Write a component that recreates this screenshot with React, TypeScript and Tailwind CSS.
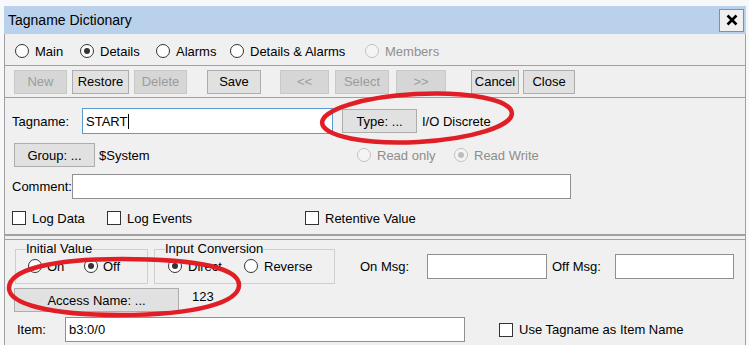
import React from "react";

function Radio({ checked = false, disabled = false }: { checked?: boolean; disabled?: boolean }) {
  return (
    <span
      className={
        "flex h-[14px] w-[14px] shrink-0 items-center justify-center rounded-full border " +
        (disabled ? "border-[#c2c2c2] bg-[#f4f4f4]" : "border-[#333333] bg-white")
      }
    >
      {checked && (
        <span className={"h-[6px] w-[6px] rounded-full " + (disabled ? "bg-[#bdbdbd]" : "bg-[#333333]")} />
      )}
    </span>
  );
}

function Check() {
  return <span className="h-[14px] w-[14px] shrink-0 border border-[#333333] bg-white" />;
}

const btn = "flex h-[24px] shrink-0 items-center justify-center border border-[#adadad] bg-[#e1e1e1] text-black";
const btnOff = "flex h-[24px] shrink-0 items-center justify-center border border-[#c8c8c8] bg-[#d6d6d6] text-[#9c9c9c]";

export default function App() {
  return (
    <div className="relative h-[345px] w-[749px] overflow-hidden bg-[#f7f8fa] pl-[4px] pt-[6px] font-['Liberation_Sans',Arial,sans-serif] text-[13px] leading-[15px] text-black">
      <div className="flex w-[742px] flex-col">
        {/* Title bar */}
        <div className="flex h-[28px] items-center justify-between bg-[#b9d1ea] pl-[4px] pr-[2px]">
          <span className="text-[14px] leading-[16px]">Tagname Dictionary</span>
          <div className="flex h-[23px] w-[25px] items-center justify-center border border-[#8d8d8d] bg-[#f0f0f0]">
            <svg width="12" height="12" viewBox="0 0 12 12">
              <path d="M1.5 1.5 L10.5 10.5 M10.5 1.5 L1.5 10.5" stroke="#000" strokeWidth="2.6" />
            </svg>
          </div>
        </div>

        {/* Upper body */}
        <div className="border-x border-b-2 border-[#a0a0a0] bg-[#f0f0f0]">
          {/* Radio tabs */}
          <div className="flex h-[31px] items-center pl-[10px] pt-[3px]">
            <div className="flex w-[65px] items-center gap-[6px]">
              <Radio />
              <span>Main</span>
            </div>
            <div className="flex w-[76px] items-center gap-[6px]">
              <Radio checked />
              <span>Details</span>
            </div>
            <div className="flex w-[74px] items-center gap-[6px]">
              <Radio />
              <span>Alarms</span>
            </div>
            <div className="flex w-[135px] items-center gap-[6px]">
              <Radio />
              <span>Details &amp; Alarms</span>
            </div>
            <div className="flex items-center gap-[6px] text-[#8f8f8f]">
              <Radio disabled />
              <span>Members</span>
            </div>
          </div>

          {/* Toolbar */}
          <div className="flex h-[33px] items-center border-y border-[#a0a0a0]">
            <div className={btnOff + " ml-[9px] w-[53px]"}>New</div>
            <div className={btn + " ml-[5px] w-[57px]"}>Restore</div>
            <div className={btnOff + " ml-[5px] w-[53px]"}>Delete</div>
            <div className={btn + " ml-[20px] w-[54px]"}>Save</div>
            <div className={btnOff + " ml-[19px] w-[49px]"}>&lt;&lt;</div>
            <div className={btnOff + " ml-[6px] w-[54px]"}>Select</div>
            <div className={btnOff + " ml-[7px] w-[50px]"}>&gt;&gt;</div>
            <div className={btn + " ml-[25px] w-[48px]"}>Cancel</div>
            <div className={btn + " ml-[4px] w-[52px]"}>Close</div>
          </div>

          {/* Tagname row */}
          <div className="mt-[10px] flex h-[26px] items-center pl-[7px]">
            <span className="w-[70px] shrink-0">Tagname:</span>
            <div className="flex h-[26px] w-[251px] shrink-0 items-center border border-[#5b9bd5] bg-white pl-[3px]">
              <span>START</span>
              <span className="ml-[1px] h-[15px] w-[1px] bg-black" />
            </div>
            <div className={btn + " ml-[9px] w-[75px]"}>Type: ...</div>
            <span className="ml-[5px]">I/O Discrete</span>
          </div>

          {/* Group row */}
          <div className="mt-[9px] flex h-[24px] items-center pl-[9px]">
            <div className={btn + " w-[81px]"}>Group: ...</div>
            <span className="ml-[4px] w-[240px] shrink-0">$System</span>
            <div className="ml-[18px] flex w-[97px] items-center gap-[6px] text-[#8d8d8d]">
              <Radio disabled />
              <span>Read only</span>
            </div>
            <div className="flex items-center gap-[6px] text-[#8d8d8d]">
              <Radio disabled checked />
              <span>Read Write</span>
            </div>
          </div>

          {/* Comment row */}
          <div className="mt-[7px] flex h-[25px] items-center pl-[7px]">
            <span className="w-[60px] shrink-0">Comment:</span>
            <div className="h-[25px] w-[499px] shrink-0 border border-[#8f8f8f] bg-white" />
          </div>

          {/* Checkbox row */}
          <div className="mb-[8px] mt-[11px] flex h-[16px] items-center pl-[7px]">
            <div className="flex w-[95px] items-center gap-[6px]">
              <Check />
              <span>Log Data</span>
            </div>
            <div className="flex w-[198px] items-center gap-[6px]">
              <Check />
              <span>Log Events</span>
            </div>
            <div className="flex items-center gap-[6px]">
              <Check />
              <span>Retentive Value</span>
            </div>
          </div>
        </div>

        <div className="h-[3px] border-x border-[#a0a0a0] bg-[#f0f0f0]" />

        {/* Lower panel */}
        <div className="border border-[#a0a0a0] bg-[#f0f0f0] pb-[4px]">
          <div className="flex h-[44px] items-start">
            <fieldset className="ml-[10px] mt-[2px] h-[42px] w-[133px] shrink-0 border border-[#cfcfcf]">
              <legend className="ml-[10px] px-0 leading-[14px]">Initial Value</legend>
              <div className="flex h-[20px] items-center pl-[12px]">
                <div className="flex w-[56px] items-center gap-[5px]">
                  <Radio />
                  <span>On</span>
                </div>
                <div className="flex items-center gap-[5px]">
                  <Radio checked />
                  <span>Off</span>
                </div>
              </div>
            </fieldset>
            <fieldset className="ml-[6px] mt-[2px] h-[42px] w-[181px] shrink-0 border border-[#cfcfcf]">
              <legend className="ml-[10px] px-0 leading-[14px]">Input Conversion</legend>
              <div className="flex h-[20px] items-center pl-[13px]">
                <div className="flex w-[76px] items-center gap-[6px]">
                  <Radio checked />
                  <span>Direct</span>
                </div>
                <div className="flex items-center gap-[6px]">
                  <Radio />
                  <span>Reverse</span>
                </div>
              </div>
            </fieldset>
            <div className="ml-[25px] mt-[14px] flex h-[25px] items-center">
              <span className="w-[67px] shrink-0">On Msg:</span>
              <div className="h-[25px] w-[120px] shrink-0 border border-[#8f8f8f] bg-white" />
              <span className="ml-[5px] w-[63px] shrink-0">Off Msg:</span>
              <div className="h-[25px] w-[119px] shrink-0 border border-[#8f8f8f] bg-white" />
            </div>
          </div>

          <div className="mt-[4px] flex h-[24px] items-center pl-[9px]">
            <div className={btn + " w-[165px]"}>Access Name: ...</div>
            <span className="mb-[7px] ml-[13px]">123</span>
          </div>

          <div className="mt-[5px] flex h-[25px] items-center pl-[12px]">
            <span className="w-[48px] shrink-0">Item:</span>
            <div className="flex h-[25px] w-[400px] shrink-0 items-center border border-[#8f8f8f] bg-white pl-[3px]">
              b3:0/0
            </div>
            <div className="ml-[34px] flex items-center gap-[6px]">
              <Check />
              <span>Use Tagname as Item Name</span>
            </div>
          </div>
        </div>
      </div>

      {/* Red annotation ellipses */}
      <svg className="pointer-events-none absolute left-0 top-0" width="749" height="345" viewBox="0 0 749 345">
        <ellipse
          cx="417"
          cy="118"
          rx="95"
          ry="24"
          transform="rotate(-3 417 118)"
          fill="none"
          stroke="#e11d25"
          strokeWidth="4.5"
        />
        <path
          d="M 9 288 C 9 270 50 259 122 259 C 196 259 239 268 239 285 C 239 302 198 315 120 315 C 50 315 9 304 9 288 Z"
          fill="none"
          stroke="#e11d25"
          strokeWidth="4.5"
        />
      </svg>
    </div>
  );
}
